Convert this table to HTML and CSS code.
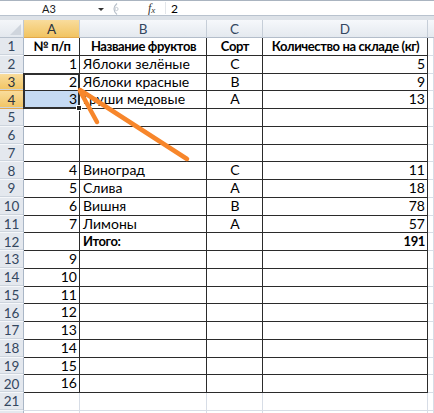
FILE: index.html
```html
<!DOCTYPE html>
<html lang="ru">
<head>
<meta charset="utf-8">
<link rel="stylesheet" href="styles.css">
</head>
<body>
<div class="app">
  <div class="fbar">
    <div class="namebox"><span class="nb-text">A3</span><span class="dd"></span></div>
    <div class="ctrl">
      <svg width="16" height="14" viewBox="0 0 16 14"><path d="M9 1.5 Q3 7 9 12.5" fill="none" stroke="#b8c0ca" stroke-width="1.2"/><circle cx="8.5" cy="7" r="1.6" fill="none" stroke="#c4cad2" stroke-width="1"/></svg>
    </div>
    <div class="fx">f<span class="fx-x">x</span></div>
    <div class="formula">2</div>
  </div>
  <div class="sheet">
    <div class="corner"><span class="tri"></span></div>
    <div class="ch sel-h">A</div>
    <div class="ch">B</div>
    <div class="ch">C</div>
    <div class="ch">D</div>
    <div class="ch edge"></div>

    <div class="rh">1</div>
    <div class="c t m b">№ п/п</div>
    <div class="c t m b">Название фруктов</div>
    <div class="c t m b">Сорт</div>
    <div class="c t m b">Количество на складе (кг)</div>
    <div class="c g"></div>

    <div class="rh">2</div>
    <div class="c t r">1</div>
    <div class="c t">Яблоки зелёные</div>
    <div class="c t m">С</div>
    <div class="c t r">5</div>
    <div class="c g"></div>

    <div class="rh sel-r">3</div>
    <div class="c t r">2</div>
    <div class="c t">Яблоки красные</div>
    <div class="c t m">В</div>
    <div class="c t r">9</div>
    <div class="c g"></div>

    <div class="rh sel-r">4</div>
    <div class="c t r hl">3</div>
    <div class="c t">Груши медовые</div>
    <div class="c t m">А</div>
    <div class="c t r">13</div>
    <div class="c g"></div>

    <div class="rh">5</div>
    <div class="c t"></div><div class="c t"></div><div class="c t"></div><div class="c t"></div><div class="c g"></div>

    <div class="rh">6</div>
    <div class="c t"></div><div class="c t"></div><div class="c t"></div><div class="c t"></div><div class="c g"></div>

    <div class="rh">7</div>
    <div class="c t"></div><div class="c t"></div><div class="c t"></div><div class="c t"></div><div class="c g"></div>

    <div class="rh">8</div>
    <div class="c t r">4</div>
    <div class="c t">Виноград</div>
    <div class="c t m">С</div>
    <div class="c t r">11</div>
    <div class="c g"></div>

    <div class="rh">9</div>
    <div class="c t r">5</div>
    <div class="c t">Слива</div>
    <div class="c t m">А</div>
    <div class="c t r">18</div>
    <div class="c g"></div>

    <div class="rh">10</div>
    <div class="c t r">6</div>
    <div class="c t">Вишня</div>
    <div class="c t m">В</div>
    <div class="c t r">78</div>
    <div class="c g"></div>

    <div class="rh">11</div>
    <div class="c t r">7</div>
    <div class="c t">Лимоны</div>
    <div class="c t m">А</div>
    <div class="c t r">57</div>
    <div class="c g"></div>

    <div class="rh">12</div>
    <div class="c t"></div>
    <div class="c t b">Итого:</div>
    <div class="c t"></div>
    <div class="c t r b">191</div>
    <div class="c g"></div>

    <div class="rh">13</div>
    <div class="c t r">9</div><div class="c t"></div><div class="c t"></div><div class="c t"></div><div class="c g"></div>
    <div class="rh">14</div>
    <div class="c t r">10</div><div class="c t"></div><div class="c t"></div><div class="c t"></div><div class="c g"></div>
    <div class="rh">15</div>
    <div class="c t r">11</div><div class="c t"></div><div class="c t"></div><div class="c t"></div><div class="c g"></div>
    <div class="rh">16</div>
    <div class="c t r">12</div><div class="c t"></div><div class="c t"></div><div class="c t"></div><div class="c g"></div>
    <div class="rh">17</div>
    <div class="c t r">13</div><div class="c t"></div><div class="c t"></div><div class="c t"></div><div class="c g"></div>
    <div class="rh">18</div>
    <div class="c t r">14</div><div class="c t"></div><div class="c t"></div><div class="c t"></div><div class="c g"></div>
    <div class="rh">19</div>
    <div class="c t r">15</div><div class="c t"></div><div class="c t"></div><div class="c t"></div><div class="c g"></div>
    <div class="rh">20</div>
    <div class="c t r">16</div><div class="c t"></div><div class="c t"></div><div class="c t"></div><div class="c g"></div>
    <div class="rh">21</div>
    <div class="c g"></div><div class="c g"></div><div class="c g"></div><div class="c g"></div><div class="c g"></div>
    <div class="rh"></div>
    <div class="c g"></div><div class="c g"></div><div class="c g"></div><div class="c g"></div><div class="c g"></div>

    <div class="selection"><span class="handle"></span></div>
  </div>
  <svg class="arrow" width="434" height="413" viewBox="0 0 434 413">
    <path d="M187 159 L80 90" fill="none" stroke="#f7862b" stroke-width="4.5" stroke-linecap="round"/>
    <path d="M80 91 L97 122" fill="none" stroke="#f7862b" stroke-width="4.5" stroke-linecap="round"/>
  </svg>
</div>
</body>
</html>
```

FILE: styles.css
```css
* { box-sizing: border-box; }
html, body { margin: 0; padding: 0; background: #ffffff; }
body { font-family: Lato, "Noto Sans", sans-serif; font-size: 14px; color: #000; }
.app { position: relative; width: 434px; height: 413px; overflow: hidden; }

.fbar {
  height: 20px;
  display: flex;
  align-items: stretch;
  background: #ffffff;
  border-top: 1px solid #aab4c0;
  border-bottom: 4px solid #dde2e8;
  box-shadow: inset 0 -1px 0 #b8c2ce;
}
.namebox {
  width: 108px;
  position: relative;
  display: flex;
  align-items: center;
  justify-content: center;
  font-size: 11px;
  color: #1a1a1a;
  padding-right: 10px;
}
.dd {
  position: absolute;
  right: 4px;
  top: 7px;
  width: 0; height: 0;
  border-left: 3px solid transparent;
  border-right: 3px solid transparent;
  border-top: 3px solid #333;
}
.ctrl { width: 40px; display: flex; align-items: center; }
.fx {
  width: 18px;
  font-family: "Liberation Serif", serif;
  font-style: italic;
  font-size: 12px;
  color: #333;
  display: flex;
  align-items: center;
  border-right: 1px solid #e3e6ea;
  margin: 1px 0 2px;
}
.fx-x { font-size: 9px; position: relative; top: 2px; }
.formula { padding-left: 5px; display: flex; align-items: center; font-size: 12px; }

.sheet {
  position: relative;
  display: grid;
  grid-template-columns: 24px 56px 127px 56px 165px 6px;
  grid-template-rows: 18px repeat(22, 17.75px);
}
.corner {
  background: linear-gradient(#f4f6f9, #e3e8ee);
  border-right: 1px solid #c0c8d2;
  border-bottom: 1px solid #b6c0cc;
  position: relative;
}
.tri {
  position: absolute;
  right: 2px; bottom: 2px;
  width: 0; height: 0;
  border-left: 11px solid transparent;
  border-bottom: 11px solid #cfd5dd;
}
.ch {
  background: linear-gradient(#f6f8fb, #e4e9ef);
  border-right: 1px solid #c6ced8;
  border-bottom: 1px solid #b3bdca;
  display: flex;
  align-items: center;
  justify-content: center;
  color: #34475f;
  font-size: 13.5px;
  padding-top: 1px;
}
.ch.edge { border-right: none; }
.ch.sel-h, .rh.sel-r {
  background: linear-gradient(#f9dc9c, #f1c462);
  color: #2a3340;
  border-bottom-color: #e3a84a;
}
.rh {
  background: #e4e8ee;
  border-right: 1px solid #a9b6c6;
  border-bottom: 1px solid #f5f7fa;
  box-shadow: inset 0 -1px 0 #cdd4dd;
  display: flex;
  align-items: center;
  justify-content: center;
  color: #34475f;
  font-size: 13.5px;
}
.rh.sel-r { border-right-color: #e3a84a; }
.c {
  line-height: 16.75px;
  padding: 0 2px 0 3px;
  white-space: nowrap;
  overflow: hidden;
}
.t { border-right: 1px solid #2b2b2b; border-bottom: 1px solid #2b2b2b; }
.g { border-right: 1px solid #d7dde6; border-bottom: 1px solid #d7dde6; }
.r { text-align: right; }
.m { text-align: center; }
.b { font-weight: 700; font-size: 13px; letter-spacing: -0.4px; }
.hl { background: #c5daf3; }

.selection {
  position: absolute;
  grid-row: 4 / 6;
  grid-column: 2 / 3;
  top: -1px; left: -1px; right: 0; bottom: 0;
  border: 2px solid #2f2f2f;
}
.handle {
  position: absolute;
  right: -4px; bottom: -4px;
  width: 6px; height: 6px;
  background: #222;
  border: 1px solid #fff;
}
.arrow { position: absolute; left: 0; top: 0; pointer-events: none; }
```
